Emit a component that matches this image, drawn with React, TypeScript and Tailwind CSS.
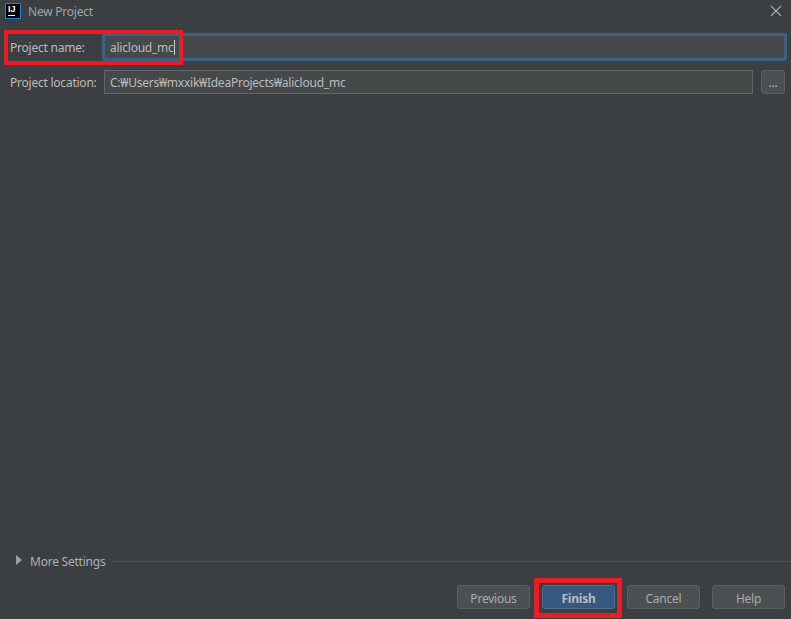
export default function App() {
  const font = { fontFamily: '"Noto Sans", "Noto Sans CJK KR", sans-serif', letterSpacing: "-0.23px" };
  const btn = "w-[73px] h-[24px] rounded-[3px] border border-[#5e6060] bg-[#4c5052] text-[#a8acae] text-[12px] leading-none flex items-center justify-center pt-[3px]";
  return (
    <div style={font} className="relative w-[791px] h-[619px] overflow-hidden bg-[#3c3f41] text-[#bbbbbb] text-[12px] flex flex-col">
      <div className="h-[24px] flex items-center pl-[5px] pr-[9px] shrink-0">
        <div className="w-[16px] h-[16px] mb-[3px] bg-black border border-[#1f7fe0] flex flex-col pl-[2px] pt-[1px]">
          <span className="text-white text-[9px] font-bold leading-[9px] tracking-normal" style={{ fontFamily: '"Liberation Sans", sans-serif' }}>IJ</span>
          <span className="w-[7px] h-px bg-white mt-[1px]" />
        </div>
        <span className="ml-[7px] text-[#a0a4a6]">New Project</span>
        <svg className="ml-auto mb-[3px]" width="12" height="12" viewBox="0 0 12 12" fill="none" stroke="#a9abad" strokeWidth="1.1">
          <path d="M1 1l10 10M11 1L1 11" />
        </svg>
      </div>
      <div className="flex items-center h-[28px] mt-[9px] pl-[10px] pr-[4px] shrink-0">
        <label className="w-[92px] pt-[2px]">Project name:</label>
        <div className="flex-1 h-[28px] rounded-[3px] border-[3px] border-[#3d6185] bg-[#45494a] flex items-center pl-[5px]">
          <span className="pt-[2px]">alicloud_mc</span>
          <span className="w-px h-[15px] bg-[#cccccc]" />
        </div>
      </div>
      <div className="flex items-center h-[24px] mt-[9px] pl-[10px] pr-[6px] shrink-0">
        <label className="w-[94px] pt-[2px]">Project location:</label>
        <div className="flex-1 h-[24px] border border-[#646464] bg-[#45494a] flex items-center pl-[5px] pt-[2px]">C:₩Users₩mxxik₩IdeaProjects₩alicloud_mc</div>
        <div className="ml-[8px] w-[24px] h-[24px] rounded-[3px] border border-[#5e6060] bg-[#4c5052] flex items-center justify-center leading-none pt-[2px]">...</div>
      </div>
      <div className="flex-1" />
      <div className="flex items-center h-[16px] pl-[16px] shrink-0">
        <svg className="mb-[2px]" width="6" height="10" viewBox="0 0 6 10" fill="#9a9d9f"><path d="M0 0l6 5-6 5z" /></svg>
        <span className="ml-[8px] text-[#a9b0b5] pt-[2px]">More Settings</span>
        <div className="ml-[6px] flex-1 h-px bg-[#515151]" />
      </div>
      <div className="flex justify-end gap-[12px] pr-[6px] pt-[16px] pb-[10px] shrink-0">
        <div className={btn}>Previous</div>
        <div className="w-[73px] h-[24px] rounded-[3px] border border-[#4c708c] bg-[#365880] text-[#bbbbbb] text-[12px] font-bold leading-none flex items-center justify-center pt-[3px]">Finish</div>
        <div className={btn}>Cancel</div>
        <div className={btn}>Help</div>
      </div>
      <div className="absolute left-[4px] top-[30px] w-[179px] h-[35px] border-[4px] border-[#ed1c24]" />
      <div className="absolute left-[534px] top-[578px] w-[88px] h-[40px] border-[5px] border-[#ed1c24]" />
    </div>
  );
}
